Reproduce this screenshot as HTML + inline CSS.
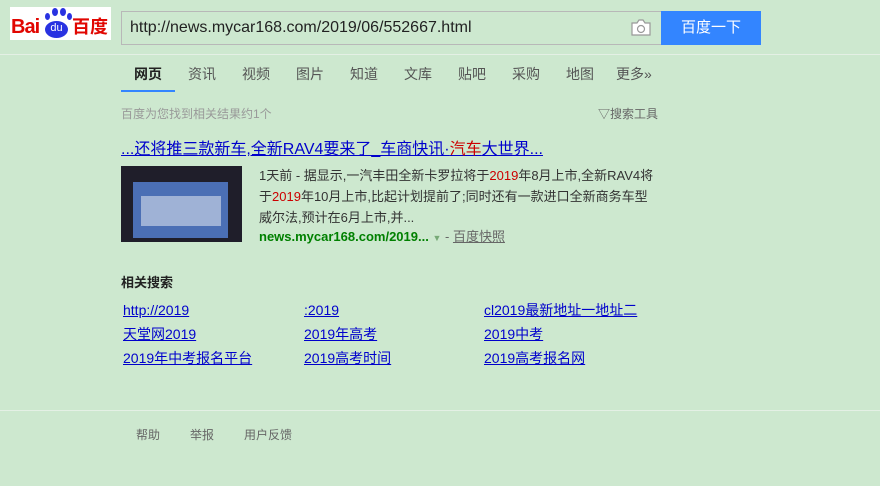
<!DOCTYPE html>
<html><head><meta charset="utf-8"><style>
*{margin:0;padding:0;box-sizing:border-box}
body{width:880px;height:486px;background:#cde8cf;font-family:"Liberation Sans","Noto Sans CJK SC",sans-serif;position:relative;overflow:hidden;font-size:13px;color:#333}
.a{position:absolute;white-space:nowrap;line-height:18px}
.logo{left:10px;top:7px;width:101px;height:33px;background:#fff}
.inp{left:121px;top:11px;width:541px;height:34px;border:1px solid #b8b8b8;border-right:none;font-size:16px;color:#222;padding:7px 0 0 8px}
.btn{left:661px;top:11px;width:100px;height:34px;background:#3385ff;color:#fff;font-size:15px;text-align:center;line-height:34px}
.hl{left:0;top:54px;width:880px;height:1px;background:#e4f0e5}
.tab{top:65px;font-size:14px;color:#555}
.lk{font-size:14px;color:#00c;text-decoration:underline}
.ft{top:426px;font-size:12px;color:#666}
</style></head><body>
<div class="a logo">
<span class="a" style="left:1px;top:9px;font:bold 20px 'Liberation Sans';color:#e10601;letter-spacing:-1px;line-height:22px">Bai</span>
<span class="a" style="left:35px;top:14px;width:23px;height:17px;border-radius:50%;background:#2932e1;color:#fff;font-size:11px;text-align:center;line-height:15px">du</span>
<span class="a" style="left:35px;top:6px;width:5px;height:7px;border-radius:50%;background:#2932e1"></span>
<span class="a" style="left:42px;top:1px;width:6px;height:8px;border-radius:50%;background:#2932e1"></span>
<span class="a" style="left:50px;top:1px;width:6px;height:8px;border-radius:50%;background:#2932e1"></span>
<span class="a" style="left:57px;top:6px;width:5px;height:7px;border-radius:50%;background:#2932e1"></span>
<span class="a" style="left:62px;top:7px;font:bold 18px 'Noto Sans CJK SC',sans-serif;color:#e10601;line-height:24px">百度</span>
</div>
<div class="a inp">http://news.mycar168.com/2019/06/552667.html</div>
<svg class="a" style="left:631px;top:19px" width="20" height="17" viewBox="0 0 20 17"><path d="M1 4h5l2-3h4l2 3h5v12H1z" fill="#fff" stroke="#999" stroke-width="1.2"/><circle cx="10" cy="10" r="3.5" fill="none" stroke="#999" stroke-width="1.2"/></svg>
<div class="a btn">百度一下</div>
<div class="a hl"></div>
<div class="a tab" style="left:134px;color:#222;font-weight:bold">网页</div>
<div class="a tab" style="left:188px">资讯</div>
<div class="a tab" style="left:242px">视频</div>
<div class="a tab" style="left:296px">图片</div>
<div class="a tab" style="left:350px">知道</div>
<div class="a tab" style="left:404px">文库</div>
<div class="a tab" style="left:458px">贴吧</div>
<div class="a tab" style="left:512px">采购</div>
<div class="a tab" style="left:566px">地图</div>
<div class="a tab" style="left:616px">更多»</div>
<div class="a" style="left:121px;top:90px;width:54px;height:2px;background:#3385ff"></div>
<div class="a" style="left:121px;top:105px;font-size:12px;color:#999">百度为您找到相关结果约1个</div>
<div class="a" style="left:598px;top:105px;font-size:12px;color:#666">▽搜索工具</div>
<div class="a lk" style="left:121px;top:140px;font-size:16px;line-height:20px">...还将推三款新车,全新RAV4要来了_车商快讯·<span style="color:#c00">汽车</span>大世界...</div>
<div class="a" style="left:121px;top:166px;width:121px;height:76px;background:#1f1e2a;overflow:hidden"><div class="a" style="left:12px;top:16px;width:95px;height:56px;background:#4b6fb5"></div><div class="a" style="left:20px;top:30px;width:80px;height:30px;background:#9fb2d6"></div></div>
<div class="a" style="left:259px;top:165px;line-height:21px;font-size:13px;color:#333">1天前 - 据显示,一汽丰田全新卡罗拉将于<span style="color:#c00">2019</span>年8月上市,全新RAV4将<br>于<span style="color:#c00">2019</span>年10月上市,比起计划提前了;同时还有一款进口全新商务车型<br>威尔法,预计在6月上市,并...</div>
<div class="a" style="left:259px;top:228px;font-size:13px;color:#008000;font-weight:bold">news.mycar168.com/2019... <span style="color:#7a7;font-size:9px;font-weight:normal">▼</span> <span style="color:#666;font-weight:normal">- <u>百度快照</u></span></div>
<div class="a" style="left:121px;top:274px;font-size:13px;font-weight:bold;color:#222">相关搜索</div>
<div class="a lk" style="left:123px;top:301px">http://2019</div>
<div class="a lk" style="left:304px;top:301px">:2019</div>
<div class="a lk" style="left:484px;top:301px">cl2019最新地址一地址二</div>
<div class="a lk" style="left:123px;top:325px">天堂网2019</div>
<div class="a lk" style="left:304px;top:325px">2019年高考</div>
<div class="a lk" style="left:484px;top:325px">2019中考</div>
<div class="a lk" style="left:123px;top:349px">2019年中考报名平台</div>
<div class="a lk" style="left:304px;top:349px">2019高考时间</div>
<div class="a lk" style="left:484px;top:349px">2019高考报名网</div>
<div class="a" style="left:0;top:410px;width:880px;height:1px;background:#e4f0e5"></div>
<div class="a ft" style="left:136px">帮助</div>
<div class="a ft" style="left:190px">举报</div>
<div class="a ft" style="left:244px">用户反馈</div>
</body></html>
